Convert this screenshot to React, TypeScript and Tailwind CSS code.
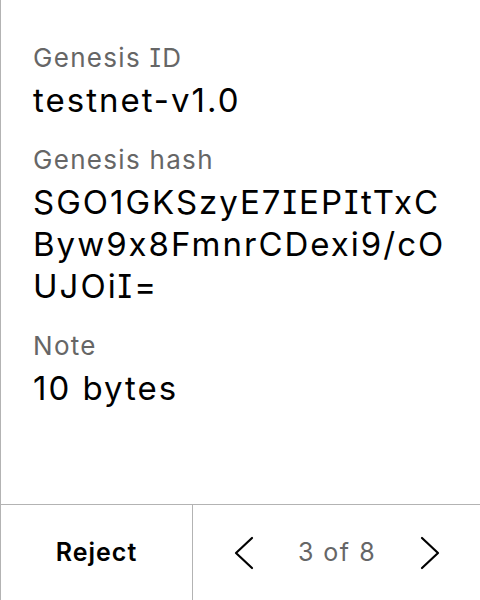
const Field = ({ label, value }: { label: string; value: string }) => (
    <div className="flex flex-col gap-[5px]">
        <span className="text-[26px] leading-[32px] tracking-[1.3px] text-[#666666]">{label}</span>
        <span className="text-[33px] leading-[42px] tracking-[2px] text-black break-all">{value}</span>
    </div>
);

const Chevron = ({ dir }: { dir: "left" | "right" }) => (
    <svg width="20" height="34" viewBox="0 0 20 34" fill="none" stroke="black" strokeWidth="2.2" strokeLinecap="round" strokeLinejoin="round">
        {dir === "left" ? <polyline points="18,2 2,17 18,32" /> : <polyline points="2,2 18,17 2,32" />}
    </svg>
);

export default function App() {
    return (
        <div className="w-[480px] h-[600px] flex flex-col bg-white border-l border-[#b3b3b3] font-[Inter,'Noto_Sans',sans-serif] [font-feature-settings:'calt'_0,'cv08'_1]">
            <div className="flex-1 flex flex-col gap-[23px] px-[32px] pt-[42px]">
                <Field label="Genesis ID" value="testnet-v1.0" />
                <Field label="Genesis hash" value="SGO1GKSzyE7IEPItTxCByw9x8FmnrCDexi9/cOUJOiI=" />
                <Field label="Note" value="10 bytes" />
            </div>
            <div className="h-[96px] flex border-t border-[#b3b3b3]">
                <button className="w-[192px] flex items-center justify-center text-[25px] tracking-[1px] font-semibold text-black border-r border-[#b3b3b3]">
                    Reject
                </button>
                <div className="flex-1 flex items-center justify-between pl-[41px] pr-[40px]">
                    <Chevron dir="left" />
                    <span className="text-[25px] tracking-[1.5px] text-[#666666]">3 of 8</span>
                    <Chevron dir="right" />
                </div>
            </div>
        </div>
    );
}
